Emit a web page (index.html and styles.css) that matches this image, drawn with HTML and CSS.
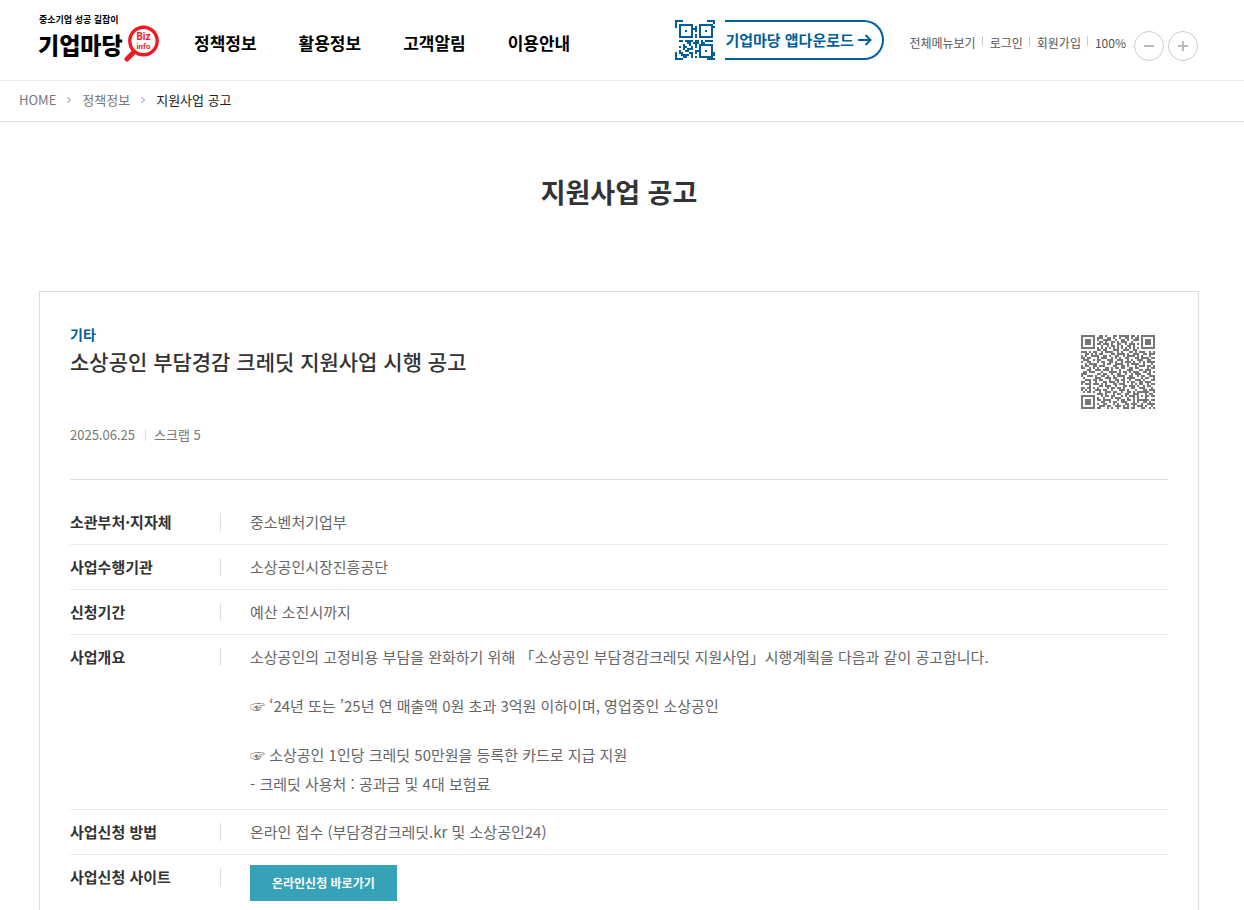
FILE: index.html
```html
<!DOCTYPE html>
<html lang="ko">
<head>
<meta charset="utf-8">
<title>지원사업 공고 | 기업마당</title>
<link rel="stylesheet" href="styles.css">
</head>
<body>
<header class="header">
  <a class="logo" href="#">
    <span class="logo-words"><span class="logo-tag">중소기업 성공 길잡이</span><span class="logo-name">기업마당</span></span>
    <svg class="logo-mark" viewBox="0 0 36 38" aria-label="Biz info">
      <path d="M10 27 L3 34" stroke="#ed1c24" stroke-width="5" stroke-linecap="round"/>
      <circle cx="19.500" cy="16" r="13.700" fill="#fff" stroke="#ed1c24" stroke-width="3.400"/>
      <text x="19.500" y="15" class="mark-biz">Biz</text>
      <text x="19.500" y="24" class="mark-info">info</text>
    </svg>
  </a>
  <nav class="nav">
    <a href="#">정책정보</a><a href="#">활용정보</a><a href="#">고객알림</a><a href="#">이용안내</a>
  </nav>
  <div class="app">
    <svg id="app-qr" class="app-qr" viewBox="0 0 20 20" fill="#005f9b" shape-rendering="crispEdges"></svg>
    <a class="app-link" href="#">기업마당 앱다운로드
      <svg class="arrow" viewBox="0 0 14 12" fill="none" stroke="#005f9b" stroke-width="2"><path d="M0 6h12M7.500 1l5 5-5 5"/></svg>
    </a>
  </div>
  <div class="util">
    <a href="#">전체메뉴보기</a><a href="#">로그인</a><a href="#">회원가입</a><span class="percent">100%</span>
    <button class="zoom" aria-label="축소"><svg viewBox="0 0 12 12"><path d="M1 6h10"/></svg></button>
    <button class="zoom" aria-label="확대"><svg viewBox="0 0 12 12"><path d="M1 6h10M6 1v10"/></svg></button>
  </div>
</header>
<nav class="crumbs">
  <a href="#">HOME</a>
  <svg viewBox="0 0 4 8"><path d="M0.500 1l3 3-3 3"/></svg>
  <a href="#">정책정보</a>
  <svg viewBox="0 0 4 8"><path d="M0.500 1l3 3-3 3"/></svg>
  <a class="current" href="#">지원사업 공고</a>
</nav>
<main class="main">
  <h1 class="page-title">지원사업 공고</h1>
  <article class="card">
    <div class="card-head">
      <div>
        <div class="category">기타</div>
        <h2 class="subject">소상공인 부담경감 크레딧 지원사업 시행 공고</h2>
        <div class="meta"><span>2025.06.25</span><span>스크랩 5</span></div>
      </div>
      <svg id="page-qr" class="page-qr" viewBox="0 0 37 37" fill="#777" shape-rendering="crispEdges"></svg>
    </div>
    <dl class="info">
      <div class="row"><dt>소관부처·지자체</dt><dd>중소벤처기업부</dd></div>
      <div class="row"><dt>사업수행기관</dt><dd>소상공인시장진흥공단</dd></div>
      <div class="row"><dt>신청기간</dt><dd>예산 소진시까지</dd></div>
      <div class="row overview"><dt>사업개요</dt><dd>
        <p>소상공인의 고정비용 부담을 완화하기 위해 「소상공인 부담경감크레딧 지원사업」시행계획을 다음과 같이 공고합니다.</p>
        <p>☞ ‘24년 또는 ’25년 연 매출액 0원 초과 3억원 이하이며, 영업중인 소상공인</p>
        <p>☞ 소상공인 1인당 크레딧 50만원을 등록한 카드로 지급 지원<br>- 크레딧 사용처 : 공과금 및 4대 보험료</p>
      </dd></div>
      <div class="row"><dt>사업신청 방법</dt><dd>온라인 접수 (부담경감크레딧.kr 및 소상공인24)</dd></div>
      <div class="row site"><dt>사업신청 사이트</dt><dd><a class="apply" href="#">온라인신청 바로가기</a></dd></div>
    </dl>
  </article>
</main>
<script src="qr.js"></script>
</body>
</html>
```

FILE: styles.css
```css
* { box-sizing: border-box; }
body {
  margin: 0;
  background: #fff;
  color: #333;
  font-family: "Noto Sans CJK KR", "Liberation Sans", sans-serif;
  font-size: 15px;
}
a { color: inherit; text-decoration: none; }
h1, h2, p, dl, dd { margin: 0; }
svg { display: block; flex: none; }

.header {
  display: flex;
  align-items: flex-start;
  height: 81px;
  padding: 0 46px 0 38px;
  border-bottom: 1px solid #ececec;
  white-space: nowrap;
}
.logo { display: flex; color: #000; padding-top: 13px; }
.logo-words { display: flex; flex-direction: column; width: 86px; font-weight: 700; }
.logo-tag { font-size: 9px; line-height: 14px; padding-left: 1px; }
.logo-name { font-size: 23px; line-height: 34px; font-weight: 900; }
.logo-mark { width: 36px; height: 38px; margin-top: 12px; }
.mark-biz, .mark-info { fill: #ed1c24; font-family: Roboto, sans-serif; font-weight: 700; text-anchor: middle; }
.mark-biz { font-size: 10px; }
.mark-info { font-size: 8px; }

.nav { display: flex; gap: 42px; margin-left: 34px; padding-top: 29px; }
.nav a { color: #000; font-size: 17px; line-height: 28px; font-weight: 700; }

.app { display: flex; gap: 10px; margin-left: auto; padding-top: 20px; }
.app-qr { width: 40px; height: 40px; }
.app-link {
  display: flex;
  align-items: center;
  justify-content: space-between;
  width: 159px;
  height: 40px;
  padding-right: 10px;
  border: 2px solid #005f9b;
  border-left: 0;
  border-radius: 0 20px 20px 0;
  color: #005f9b;
  font-size: 15px;
  line-height: 34px;
  font-weight: 700;
}
.arrow { width: 14px; height: 12px; }

.util { display: flex; align-items: center; margin-left: 25px; padding-top: 31px; color: #555; font-size: 12px; line-height: 24px; }
.util a { position: relative; margin-right: 14px; margin-bottom: 6px; }
.util a::after { content: ""; position: absolute; top: 5px; right: -7px; width: 1px; height: 10px; background: #ccc; }
.percent { margin-right: 8px; margin-bottom: 6px; }
.zoom {
  display: flex;
  align-items: center;
  justify-content: center;
  width: 30px;
  height: 30px;
  padding: 0;
  border: 1px solid #ccc;
  border-radius: 50%;
  background: #fff;
}
.zoom + .zoom { margin-left: 4px; }
.zoom svg { width: 12px; height: 12px; stroke: #bbb; stroke-width: 2; }

.crumbs {
  display: flex;
  align-items: center;
  gap: 11px;
  height: 41px;
  padding: 0 0 3px 19px;
  border-bottom: 1px solid #ddd;
  color: #777;
  font-size: 13px;
}
.crumbs svg { width: 4px; height: 8px; fill: none; stroke: #888; }
.crumbs .current { color: #222; }

.main { padding: 48px 45px 0 39px; }
.page-title { margin-bottom: 77px; font-size: 27px; line-height: 44px; text-align: center; }
.card { padding: 32px 30px 40px; border: 1px solid #ddd; }
.card-head { display: flex; justify-content: space-between; padding-bottom: 34px; border-bottom: 1px solid #ddd; }
.category { color: #005f8f; font-size: 14px; line-height: 20px; font-weight: 700; }
.subject { font-size: 21px; line-height: 34px; font-weight: 500; }
.meta { display: flex; margin-top: 47px; color: #777; font-size: 13px; line-height: 20px; }
.meta span + span { position: relative; margin-left: 19px; }
.meta span + span::before { content: ""; position: absolute; top: 4px; left: -9px; width: 1px; height: 12px; background: #ddd; }
.page-qr { width: 74px; height: 74px; margin: 11px 13px 0 0; }

.info { padding-top: 20px; }
.row { display: flex; gap: 29px; padding: 7px 0 8px; border-bottom: 1px solid #ececec; line-height: 29px; }
.row dt {
  display: flex;
  justify-content: space-between;
  align-items: center;
  align-self: flex-start;
  flex: none;
  width: 151px;
  font-weight: 700;
}
.row dt::after { content: ""; width: 1px; height: 18px; background: #ddd; }
.row dd { color: #666; flex: 1; }
.overview { padding-bottom: 11px; }
.overview p + p { margin-top: 20px; }
.site { padding-bottom: 20px; }
.apply {
  display: inline-block;
  margin-top: 3px;
  padding: 0 22px;
  background: #37a1b7;
  color: #fff;
  font-size: 12px;
  line-height: 36px;
  font-weight: 700;
}
```

FILE: qr.js
```js
const appRows = [
  "####............####",
  "#..................#",
  "#.#######...#######.",
  "#.#.....#.#.#.....##",
  "..#.....###.#.....#.",
  "..#..#..#.#.#..#..#.",
  "..#.....#...#.....#.",
  "..#.....#.#.#.....#.",
  "..#######.#.#######.",
  "....................",
  "..##.####.##.#.####.",
  "......##.###.##.....",
  "....#..#..#.#######.",
  "..#.##..#.#.#.....#.",
  "....#.###...#.....#.",
  "..#..##...###..#..#.",
  "#.##...##.#.#.....##",
  "#..####.#...#.....##",
  "#...##..#.#.#######.",
  "####............####"
];
const pageRows = [
  "#######..##.#...##.#####.##.#.#######",
  "#.....#.###..##.#..#..##.#.##.#.....#",
  "#.###.#.#..####..#..##.#..###.#.###.#",
  "#.###.#..##.#..##.#.###..#....#.###.#",
  "#.###.#.##.###.#..##..#.###.#.#.###.#",
  "#.....#...#..#.##.#.#..##.#...#.....#",
  "#######.#.#.#.#.#.#.#.#.#.#.#.#######",
  "........##.##...###..###..##.........",
  "###.#.##..#.####..#.#...##.#.###..#.#",
  "..##.#.#.##....##.####.#..###..##.###",
  "#.#..####..##.#..##..#.####.#.#...#..",
  "##.##...#.###..#.#.#..##...##.####.##",
  ".###..#.##...###..###..#.#..###..##..",
  "#..##...#.##..##.#..#.###.#..#.#.####",
  "..#.####...#.##..####..#.####..#...#.",
  "#.##..##.###....##..##.#...#.###.##.#",
  "##..#.#.#...##.#.##.##..##.##....#.##",
  "...##..###.###.#...#...###...##.###..",
  ".##.###...#...####.#.##.#.###..##.#.#",
  "###.....##.##..#..##..#..#.###...##..",
  "#..###.#..##.#..#.####..##..#.##..###",
  ".#.....###..###.##...#.####...#.##..#",
  "..###.##.##...#..##.##..#..###.#...##",
  "##..#..#...##.###.#..#.#.##..##.###..",
  "#.###.###.#.#...##.###...#.#.##..#.##",
  "....#....##.###..#...##.###.#..#.##..",
  "##.##.#.#....#.##.##.#...##..###...#.",
  "#.#.#..###.##..#...###.#...#...##.###",
  ".#.##.#..#..###.##..#..##.#.######..#",
  "........###.#...#.##..##..###...#.##.",
  "#######...#.##.##...#.#.###.#.#.##.##",
  "#.....#.#..#...#.###...#..#.#...#....",
  "#.###.#.##.####...#.##.##.#.######.##",
  "#.###.#...##..#.##..###...#.#..##.#..",
  "#.###.#.#..##...#.#...##.###..#..####",
  "#.....#..###.##..###.#.#..#.###.#..#.",
  "#######.##...#.#..#..###.##...##..#.#"
];

function draw(id, rows) {
  let d = "";
  rows.forEach((row, y) => {
    for (const run of row.matchAll(/#+/g)) {
      d += `M${run.index} ${y}h${run[0].length}v1h-${run[0].length}z`;
    }
  });
  const path = document.createElementNS("http://www.w3.org/2000/svg", "path");
  path.setAttribute("d", d);
  document.getElementById(id).append(path);
}
draw("app-qr", appRows);
draw("page-qr", pageRows);
```
